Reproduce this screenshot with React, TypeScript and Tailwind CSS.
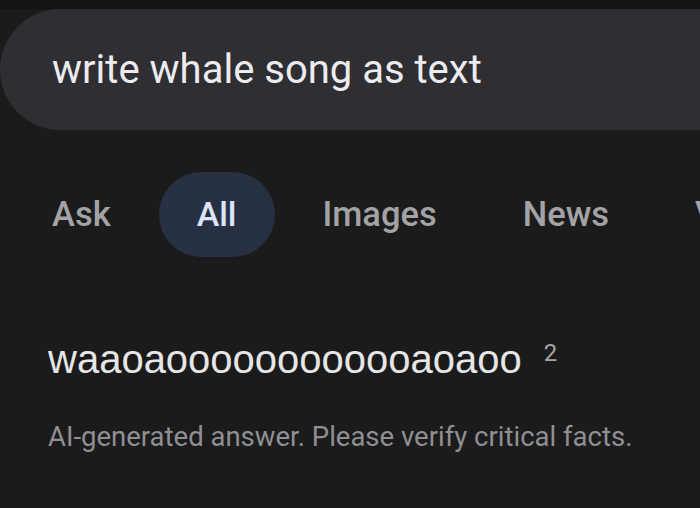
const tabs = ["Ask", "All", "Images", "News", "Videos"];

export default function App() {
	return (
		<div className="h-[508px] w-[700px] overflow-hidden bg-[#1b1b1b]" style={{ fontFamily: "Roboto, 'Liberation Sans', sans-serif" }}>
			<div className="h-[9px] bg-[#141414]" />
			<div className="flex h-[121px] w-[760px] items-center rounded-l-[61px] bg-[#2f2f33] pl-[52px]">
				<span className="text-[40px] text-[#ececf0]">write whale song as text</span>
			</div>

			<div className="mt-[42px] flex h-[85px] gap-[10px] pl-[14px] whitespace-nowrap">
				{tabs.map((t) =>
					t === "All" ? (
						<div key={t} className="flex items-center rounded-full bg-[#283044] px-[38px] text-[34px] font-medium text-[#dde4fb]">
							{t}
						</div>
					) : (
						<div key={t} className="flex items-center px-[38px] text-[34.5px] font-medium text-[#a3a3a6]">
							{t}
						</div>
					),
				)}
			</div>

			<div className="mt-[78px] flex items-start pl-[48px]">
				<span className="text-[40px] leading-[48px] text-[#e6e6e6]" style={{ fontFamily: "'Liberation Sans', Arial, sans-serif" }}>
					waaoaoooooooooooaoaoo
				</span>
				<span className="ml-[22px] mt-[5px] text-[24px] leading-[26px] text-[#a6a6a6]">2</span>
			</div>

			<div className="mt-[33px] pl-[48px] text-[27.5px] text-[#8f8f93]">AI-generated answer. Please verify critical facts.</div>
		</div>
	);
}
